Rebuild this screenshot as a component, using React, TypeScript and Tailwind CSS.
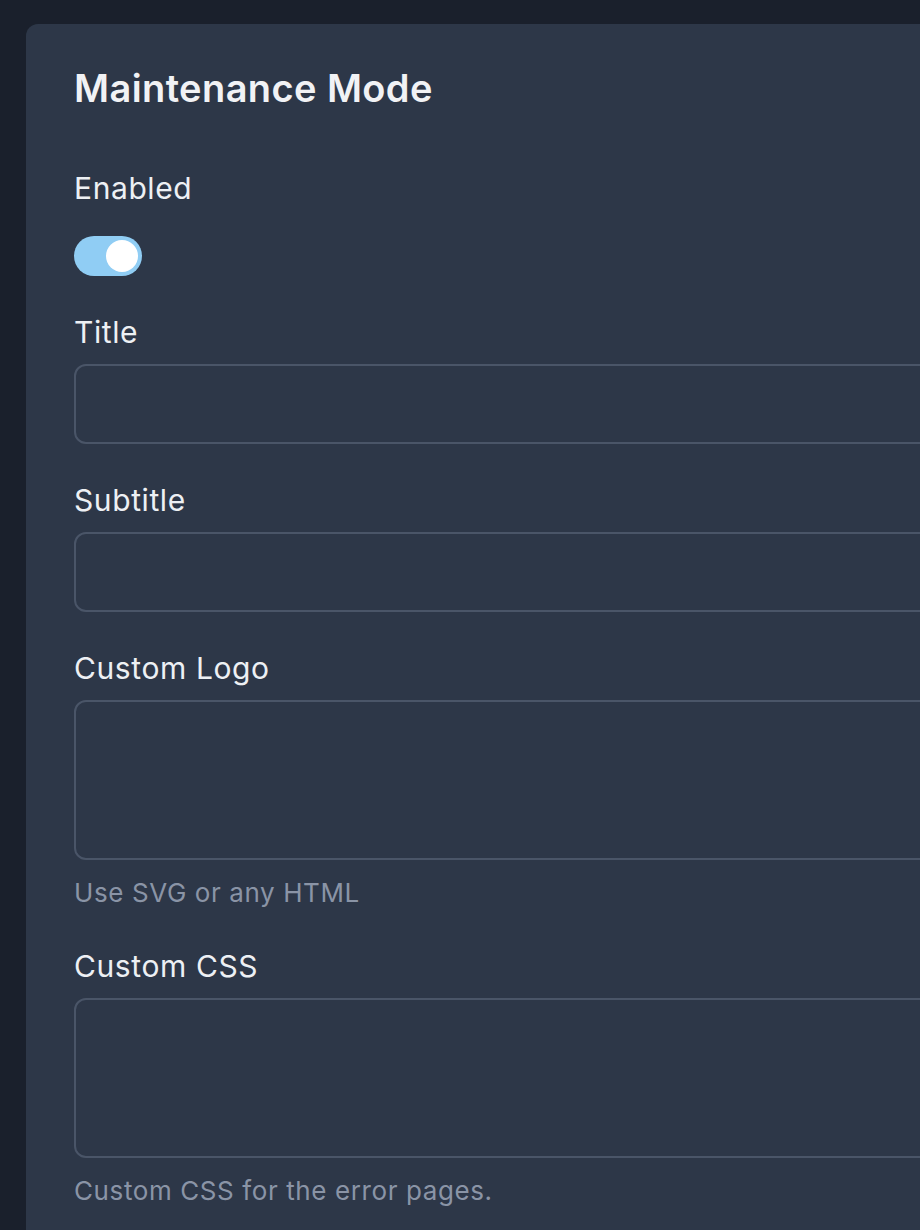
import { useState } from "react";

function Field({
  label,
  help,
  tall,
}: {
  label: string;
  help?: string;
  tall?: boolean;
}) {
  return (
    <div className="flex flex-col">
      <label className="text-[30px] leading-[40px] tracking-[0.6px] text-[#edf0f4]">{label}</label>
      {tall ? (
        <textarea className="mt-[12px] h-[160px] resize-none rounded-[12px] border-2 border-[#4a5568] bg-transparent outline-none" />
      ) : (
        <input className="mt-[12px] h-[80px] rounded-[12px] border-2 border-[#4a5568] bg-transparent outline-none" />
      )}
      {help && (
        <p className="mt-[16px] text-[26px] leading-[34px] tracking-[0.6px] text-[#8a94a6]">{help}</p>
      )}
    </div>
  );
}

export default function App() {
  const [enabled, setEnabled] = useState(true);

  return (
    <div
      className="h-[1230px] w-[920px] overflow-hidden bg-[#1a202c] pt-[24px] pl-[26px]"
      style={{ fontFamily: "Inter, 'Noto Sans', sans-serif" }}
    >
      <div className="w-[1100px] rounded-[12px] bg-[#2d3748] px-[48px] pt-[44px] pb-[60px]">
        <h2 className="text-[38px] leading-[40px] tracking-[0.4px] font-semibold text-[#f1f2f5]">Maintenance Mode</h2>

        <div className="mt-[60px] flex flex-col gap-[36px]">
          <div className="flex flex-col">
            <span className="text-[30px] leading-[40px] tracking-[0.6px] text-[#edf0f4]">Enabled</span>
            <button
              onClick={() => setEnabled(!enabled)}
              className={
                "mt-[28px] flex h-[40px] w-[68px] items-center rounded-full px-[4px] " +
                (enabled ? "justify-end bg-[#90cdf4]" : "justify-start bg-[#4a5568]")
              }
            >
              <span className="h-[32px] w-[32px] rounded-full bg-white" />
            </button>
          </div>
          <Field label="Title" />
          <Field label="Subtitle" />
          <Field label="Custom Logo" help="Use SVG or any HTML" tall />
          <Field label="Custom CSS" help="Custom CSS for the error pages." tall />
        </div>
      </div>
    </div>
  );
}
